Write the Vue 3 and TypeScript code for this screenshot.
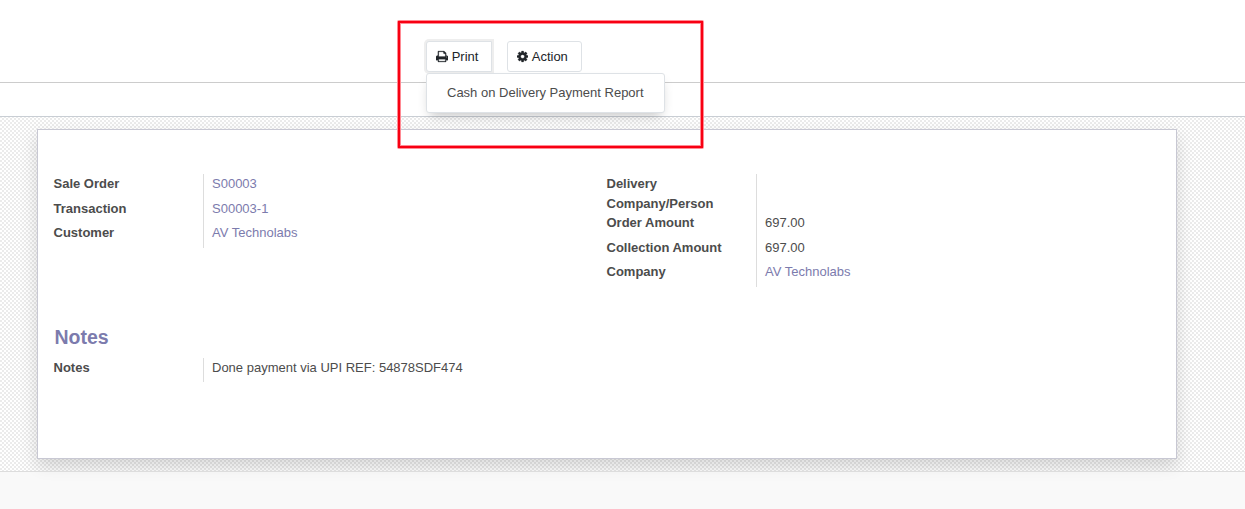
<script setup lang="ts">
interface Field {
  label: string
  value: string
  link?: boolean
}

const orderFields: Field[] = [
  { label: 'Sale Order', value: 'S00003', link: true },
  { label: 'Transaction', value: 'S00003-1', link: true },
  { label: 'Customer', value: 'AV Technolabs', link: true },
]

const paymentFields: Field[] = [
  { label: 'Delivery Company/Person', value: '' },
  { label: 'Order Amount', value: '697.00' },
  { label: 'Collection Amount', value: '697.00' },
  { label: 'Company', value: 'AV Technolabs', link: true },
]

const noteFields: Field[] = [
  { label: 'Notes', value: 'Done payment via UPI REF: 54878SDF474' },
]

const groups = [
  { name: 'order', fields: orderFields },
  { name: 'payment', fields: paymentFields },
]
</script>

<template>
  <div class="page">
    <header class="control-panel">
      <div class="actions">
        <div class="dropdown">
          <button class="btn active" type="button">
            <svg class="print-icon" viewBox="0 0 1664 1792">
              <path d="M384 1536h896v-256h-896v256zM384 896h896v-384h-160q-40 0-68-28t-28-68v-160h-640v640zM1536 960q0-26-19-45t-45-19-45 19-19 45 19 45 45 19 45-19 19-45zM1664 960v416q0 13-9.500 22.500t-22.500 9.500h-224v160q0 40-28 68t-68 28h-960q-40 0-68-28t-28-68v-160h-224q-13 0-22.500-9.500t-9.500-22.500v-416q0-79 56.500-135.500t135.500-56.500h64v-544q0-40 28-68t68-28h672q40 0 88 20t76 48l152 152q28 28 48 76t20 88v256h64q79 0 135.500 56.500t56.500 135.500z" />
            </svg>
            <span>Print</span>
          </button>
          <div class="menu">Cash on Delivery Payment Report</div>
        </div>
        <button class="btn" type="button">
          <svg class="cog-icon" viewBox="0 0 1536 1792">
            <path d="M1024 896q0-106-75-181t-181-75-181 75-75 181 75 181 181 75 181-75 75-181zm512-109v222q0 12-8 23t-20 13l-185 28q-19 54-39 91 35 50 107 138 10 12 10 25t-9 23q-27 37-99 108t-94 71q-12 0-26-9l-138-108q-44 23-91 38-16 136-29 186-7 28-36 28h-222q-14 0-24.500-8.500t-11.500-21.500l-28-184q-49-16-90-37l-141 107q-10 9-25 9-14 0-25-11-126-114-165-168-7-10-7-23 0-12 8-23 15-21 51-66.500t54-70.500q-27-50-41-99l-183-27q-13-2-21-12.500t-8-23.500v-222q0-12 8-23t19-13l186-28q14-46 39-92-40-57-107-138-10-12-10-24 0-10 9-23 26-36 98.500-107.500t94.500-71.500q13 0 26 10l138 107q44-23 91-38 16-136 29-186 7-28 36-28h222q14 0 24.500 8.500t11.500 21.500l28 184q49 16 90 37l142-107q9-9 24-9 13 0 25 10 129 119 165 170 7 8 7 22 0 12-8 23-15 21-51 66.500t-54 70.500q26 50 41 98l183 28q13 2 21 12.500t8 23.500z" />
          </svg>
          <span>Action</span>
        </button>
      </div>
      <div class="highlight"></div>
    </header>
    <div class="statusbar"></div>
    <main class="content">
      <section class="sheet">
        <div class="groups">
          <div v-for="group in groups" :key="group.name" class="group">
            <div v-for="field in group.fields" :key="field.label" class="row">
              <div class="label">{{ field.label }}</div>
              <div class="value" :class="{ link: field.link }">{{ field.value }}</div>
            </div>
          </div>
        </div>
        <h2 class="title">Notes</h2>
        <div class="group">
          <div v-for="field in noteFields" :key="field.label" class="row">
            <div class="label">{{ field.label }}</div>
            <div class="value">{{ field.value }}</div>
          </div>
        </div>
      </section>
    </main>
    <footer class="chatter"></footer>
  </div>
</template>

<style>
body {
  margin: 0;
  overflow: hidden;
}
</style>

<style scoped>
.page {
  display: flex;
  flex-direction: column;
  height: 509px;
  background: #fff;
  color: #4c4c4c;
  font: 13px/19.5px "Liberation Sans", Arial, sans-serif;
}

.page * {
  box-sizing: border-box;
}

.control-panel {
  position: relative;
  z-index: 2;
  height: 83px;
  flex: none;
  border-bottom: 1px solid #cccccc;
}

.actions {
  display: flex;
  gap: 15px;
  padding: 41px 0 0 426px;
}

.dropdown {
  position: relative;
}

.btn {
  display: flex;
  align-items: center;
  width: 75px;
  height: 31px;
  padding: 0 0 0 9px;
  border: 1px solid #dee2e6;
  border-radius: 3px;
  background: #fff;
  color: #212529;
  font: inherit;
}

.btn.active {
  width: 66px;
  border-radius: 3px 0 0 3px;
  box-shadow: 0 0 0 2px #eeeeee;
}

.btn svg {
  flex: none;
  height: 13px;
  margin-right: 3.6px;
  fill: currentColor;
  stroke: currentColor;
  stroke-width: 30px;
}

.print-icon {
  width: 12.07px;
}

.cog-icon {
  width: 11.14px;
}

.menu {
  position: absolute;
  top: 32px;
  left: 0;
  width: 239px;
  height: 40px;
  padding: 9px 20px;
  border: 1px solid #dee2e6;
  border-radius: 3px;
  background: #fff;
  box-shadow: 0 6px 12px -4px rgba(0, 0, 0, 0.25);
  white-space: nowrap;
}

.highlight {
  position: absolute;
  top: 20px;
  left: 397px;
  width: 307px;
  height: 129px;
  border: 4px solid #ff8a93;
  border-radius: 2px;
}

.highlight::after {
  content: "";
  position: absolute;
  inset: -3px;
  border: 2px solid #f80012;
}

.statusbar {
  height: 34px;
  flex: none;
  border-bottom: 1px solid #c9ced4;
}

.content {
  height: 354px;
  flex: none;
  padding: 12px 68px 0 37px;
  background: repeating-conic-gradient(#ebebeb 0 25%, #fff 0 50%) 0 1px / 4px 4px;
}

.sheet {
  width: 1140px;
  height: 330px;
  padding: 44px 15.5px 0;
  border: 1px solid #c8c8d3;
  background: #fff;
  box-shadow: 0 8px 16px rgba(0, 0, 0, 0.15);
}

.groups {
  display: grid;
  grid-template-columns: 553px 1fr;
  align-items: start;
}

.row {
  display: flex;
}

.label {
  width: 150.5px;
  flex: none;
  border-right: 1px solid #dddddd;
  font-weight: bold;
}

.value {
  min-height: 24.5px;
  padding: 0 8px 5px;
}

.link {
  color: #7c7bad;
}

.title {
  margin: 37px 0 7px 1px;
  color: #7c7bad;
  font-size: 19.5px;
  line-height: 27px;
}

.chatter {
  flex: 1;
  border-top: 1px solid #dddddd;
  background: rgba(243, 243, 243, 0.5);
}
</style>
